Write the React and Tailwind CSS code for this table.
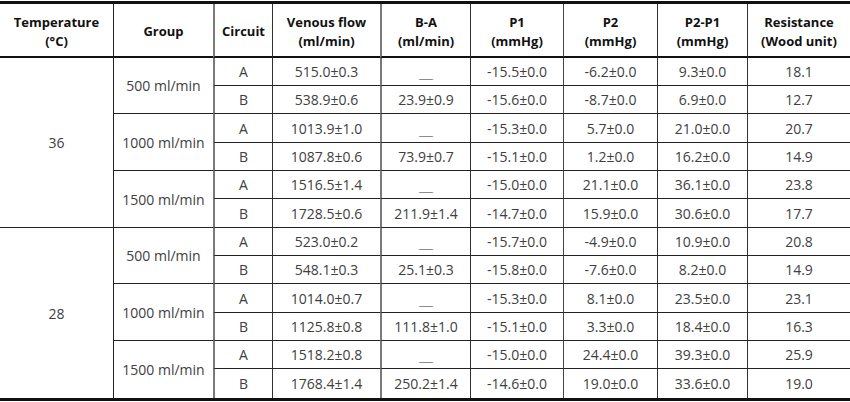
import React from "react";

const data = [
  {
    temp: "36",
    groups: [
      {
        name: "500 ml/min",
        rows: [
          ["A", "515.0±0.3", null, "-15.5±0.0", "-6.2±0.0", "9.3±0.0", "18.1"],
          ["B", "538.9±0.6", "23.9±0.9", "-15.6±0.0", "-8.7±0.0", "6.9±0.0", "12.7"],
        ],
      },
      {
        name: "1000 ml/min",
        rows: [
          ["A", "1013.9±1.0", null, "-15.3±0.0", "5.7±0.0", "21.0±0.0", "20.7"],
          ["B", "1087.8±0.6", "73.9±0.7", "-15.1±0.0", "1.2±0.0", "16.2±0.0", "14.9"],
        ],
      },
      {
        name: "1500 ml/min",
        rows: [
          ["A", "1516.5±1.4", null, "-15.0±0.0", "21.1±0.0", "36.1±0.0", "23.8"],
          ["B", "1728.5±0.6", "211.9±1.4", "-14.7±0.0", "15.9±0.0", "30.6±0.0", "17.7"],
        ],
      },
    ],
  },
  {
    temp: "28",
    groups: [
      {
        name: "500 ml/min",
        rows: [
          ["A", "523.0±0.2", null, "-15.7±0.0", "-4.9±0.0", "10.9±0.0", "20.8"],
          ["B", "548.1±0.3", "25.1±0.3", "-15.8±0.0", "-7.6±0.0", "8.2±0.0", "14.9"],
        ],
      },
      {
        name: "1000 ml/min",
        rows: [
          ["A", "1014.0±0.7", null, "-15.3±0.0", "8.1±0.0", "23.5±0.0", "23.1"],
          ["B", "1125.8±0.8", "111.8±1.0", "-15.1±0.0", "3.3±0.0", "18.4±0.0", "16.3"],
        ],
      },
      {
        name: "1500 ml/min",
        rows: [
          ["A", "1518.2±0.8", null, "-15.0±0.0", "24.4±0.0", "39.3±0.0", "25.9"],
          ["B", "1768.4±1.4", "250.2±1.4", "-14.6±0.0", "19.0±0.0", "33.6±0.0", "19.0"],
        ],
      },
    ],
  },
];

const headers = [
  ["Temperature", "(°C)"],
  ["Group"],
  ["Circuit"],
  ["Venous flow", "(ml/min)"],
  ["B-A", "(ml/min)"],
  ["P1", "(mmHg)"],
  ["P2", "(mmHg)"],
  ["P2-P1", "(mmHg)"],
  ["Resistance", "(Wood unit)"],
];

// left border per column index (0..8)
const leftBorder = [
  "",
  "border-l border-l-[#222]",
  "border-l-2 border-l-[#7a7a7a]",
  "border-l border-l-[#333]",
  "border-l-2 border-l-[#7a7a7a]",
  "border-l border-l-[#333]",
  "border-l border-l-[#444]",
  "border-l border-l-[#333]",
  "border-l border-l-[#333]",
];

export default function App() {
  const cells = [];

  headers.forEach((h, i) => {
    cells.push(
      <div
        key={"h" + i}
        className={`flex flex-col items-center justify-center border-b-2 border-b-[#111] pt-[3px] text-[13px] font-bold leading-[19px] text-[#111] ${leftBorder[i]}`}
      >
        {h.map((line, j) => (
          <span key={j}>{line}</span>
        ))}
      </div>
    );
  });

  data.forEach((block, bi) => {
    const lastBlock = bi === data.length - 1;
    block.groups.forEach((g, gi) => {
      const lastGroup = lastBlock && gi === block.groups.length - 1;
      g.rows.forEach((r, ri) => {
        const lastRow = lastGroup && ri === 1;
        if (gi === 0 && ri === 0) {
          cells.push(
            <div
              key={`t${bi}`}
              className={`col-start-1 row-span-6 flex items-center justify-center ${
                lastBlock ? "" : "border-b border-b-[#222]"
              }`}
            >
              {block.temp}
            </div>
          );
        }
        if (ri === 0) {
          cells.push(
            <div
              key={`g${bi}-${gi}`}
              className={`col-start-2 row-span-2 flex items-center justify-center ${leftBorder[1]} ${
                lastGroup ? "" : "border-b border-b-[#222]"
              }`}
            >
              {g.name}
            </div>
          );
        }
        r.forEach((v, ci) => {
          const col = ci + 2;
          cells.push(
            <div
              key={`c${bi}-${gi}-${ri}-${ci}`}
              className={`${ci === 0 ? "col-start-3" : ""} flex items-center justify-center ${leftBorder[col]} ${
                lastRow ? "" : "border-b border-b-[#222]"
              }`}
            >
              {v === null ? (
                <span className="translate-y-[1px] font-['Noto_Sans_CJK_JP',sans-serif] text-[14px] text-[#333]">＿</span>
              ) : (
                v
              )}
            </div>
          );
        });
      });
    });
  });

  return (
    <div className="h-[402px] w-[850px] bg-white pt-[1px] font-['Open_Sans',sans-serif]">
      <div className="grid grid-cols-[113px_100px_59px_108px_90px_93px_94px_90px_103px] grid-rows-[54px_28px_28px_29px_28px_28px_29px_28px_28px_29px_28px_28px_29px] border-y-[3px] border-y-[#111] text-[14px] text-[#404040]">
        {cells}
      </div>
    </div>
  );
}
